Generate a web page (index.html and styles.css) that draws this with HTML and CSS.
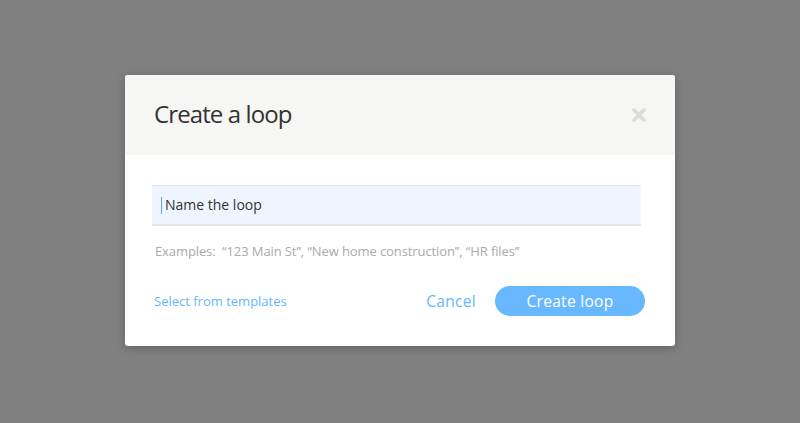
FILE: index.html
```html
<!DOCTYPE html>
<html>
<head>
<meta charset="utf-8">
<link rel="stylesheet" href="styles.css">
</head>
<body>
<div class="overlay">
  <div class="modal">
    <div class="modal-header">
      <h1 class="title">Create a loop</h1>
      <svg class="close" width="14" height="14" viewBox="0 0 14 14"><path d="M2 2 L12 12 M12 2 L2 12" stroke="#dcdcdc" stroke-width="3.6" stroke-linecap="round"/></svg>
    </div>
    <div class="modal-body">
      <div class="input"><span class="caret"></span><span class="placeholder">Name the loop</span></div>
      <p class="examples">Examples:&nbsp; “123 Main St”, “New home construction”, “HR files”</p>
      <div class="footer">
        <a class="templates">Select from templates</a>
        <div class="actions">
          <a class="cancel">Cancel</a>
          <button class="primary">Create loop</button>
        </div>
      </div>
    </div>
  </div>
</div>
</body>
</html>
```
FILE: styles.css
```css
html, body {
  margin: 0;
  padding: 0;
  height: 100%;
}
body {
  background: #808080;
  font-family: "Open Sans", "Liberation Sans", sans-serif;
}
.overlay {
  display: flex;
  justify-content: center;
  padding-top: 75px;
}
.modal {
  width: 550px;
  background: #fff;
  border-radius: 3px;
  box-shadow: 0 2px 8px rgba(0,0,0,0.25);
  overflow: hidden;
}
.modal-header {
  height: 80px;
  background: #f6f6f4;
  display: flex;
  align-items: center;
  justify-content: space-between;
  padding: 0 29px 0 29px;
}
.title {
  margin: 0;
  font-weight: 400;
  font-size: 24px;
  color: #333;
  letter-spacing: -0.9px;
  padding-bottom: 3px;
}
.close {
  display: block;
}
.modal-body {
  padding: 30px 30px 30px 27px;
}
.input {
  height: 38px;
  margin-right: 4px;
  background: #eef5fe;
  border-top: 1px solid #e2e2e2;
  border-bottom: 2px solid #e6e6e6;
  display: flex;
  align-items: center;
  padding-left: 9px;
}
.caret {
  width: 1px;
  height: 17px;
  background: #5aa6f0;
  margin-right: 3px;
}
.placeholder {
  font-size: 14px;
  color: #333;
  padding-bottom: 1px;
}
.examples {
  margin: 16px 0 0 3px;
  font-size: 13px;
  color: #aaa;
  letter-spacing: -0.1px;
}
.footer {
  margin-top: 26px;
  display: flex;
  justify-content: space-between;
  align-items: center;
}
.templates {
  font-size: 13px;
  color: #66b6ff;
  font-weight: 500;
  padding-left: 2px;
}
.actions {
  display: flex;
  align-items: center;
  gap: 19px;
}
.cancel {
  font-size: 15.5px;
  color: #66b6ff;
  font-weight: 500;
  letter-spacing: 0.3px;
}
.primary {
  width: 150px;
  height: 30px;
  border: none;
  border-radius: 15px;
  background: #68b8ff;
  color: #fff;
  font-family: "Open Sans", "Liberation Sans", sans-serif;
  font-size: 15.5px;
  font-weight: 500;
  letter-spacing: 0.3px;
  padding: 0;
}
```
